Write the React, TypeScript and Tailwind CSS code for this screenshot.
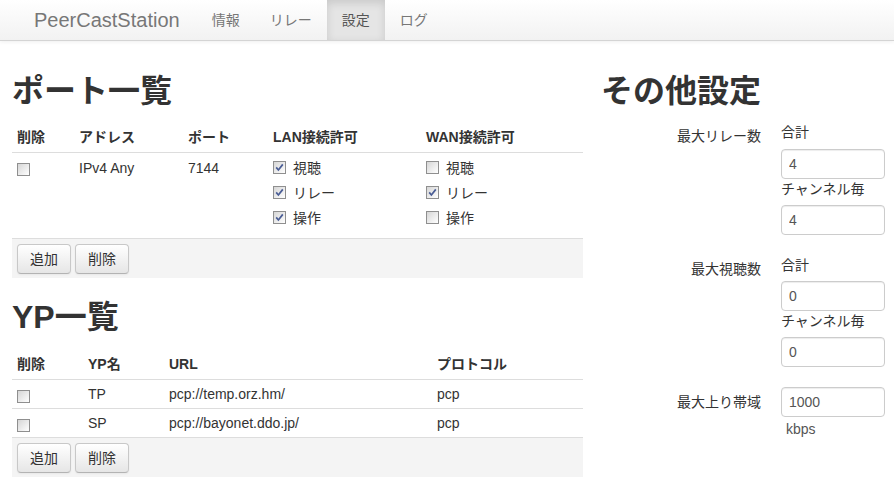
import React from "react";

function Check({ checked = false }: { checked?: boolean }) {
  return (
    <span className="inline-flex h-[13px] w-[13px] shrink-0 items-center justify-center border border-[#8f8f8f] bg-linear-to-br from-[#d6d6d6] to-white">
      {checked && (
        <svg viewBox="0 0 11 11" className="h-[11px] w-[11px]">
          <path d="M2.2 5.4 L4.4 8 L8.8 2.4" fill="none" stroke="#4a5d95" strokeWidth="1.7" />
        </svg>
      )}
    </span>
  );
}

function Button({ children }: { children: React.ReactNode }) {
  return (
    <button className="h-[30px] rounded-[4px] border border-[#c8c8c8] border-b-[#b3b3b3] bg-linear-to-b from-white to-[#e6e6e6] px-[12px] text-[14px] leading-[20px] text-[#333] shadow-[0_1px_2px_rgba(0,0,0,0.05)]">
      {children}
    </button>
  );
}

function Footer() {
  return (
    <div className="flex gap-[4px] bg-[#f4f4f4] px-[5px] pt-[5px] pb-[4px]">
      <Button>追加</Button>
      <Button>削除</Button>
    </div>
  );
}

function CheckItem({ checked, label }: { checked?: boolean; label: string }) {
  return (
    <div className="flex h-[25px] items-center gap-[7px]">
      <Check checked={checked} />
      <span>{label}</span>
    </div>
  );
}

function NumberInput({ value }: { value: string }) {
  return (
    <input
      defaultValue={value}
      className="h-[30px] w-[104px] rounded-[4px] border border-[#ccc] bg-white px-[7px] text-[14px] text-[#555] shadow-[inset_0_1px_1px_rgba(0,0,0,0.075)] outline-none"
    />
  );
}

const navItems = ["情報", "リレー", "設定", "ログ"];

export default function App() {
  return (
    <div className="min-h-[484px] bg-white font-['Liberation_Sans','Noto_Sans_CJK_JP',sans-serif] text-[14px] leading-[20px] text-[#333]">
      {/* navbar */}
      <div className="flex h-[41px] items-center border-b border-[#d4d4d4] bg-linear-to-b from-white to-[#f2f2f2] shadow-[0_1px_4px_rgba(0,0,0,0.065)]">
        <div className="pl-[34px] pr-[17px] text-[20px] leading-[20px] text-[#777]">PeerCastStation</div>
        <div className="flex h-[40px]">
          {navItems.map((item) => (
            <div
              key={item}
              className={
                item === "設定"
                  ? "flex h-[40px] items-center bg-[#e5e5e5] px-[15px] text-[#555] shadow-[inset_0_3px_8px_rgba(0,0,0,0.125)]"
                  : "flex h-[40px] items-center px-[15px] text-[#777]"
              }
            >
              {item}
            </div>
          ))}
        </div>
      </div>

      <div className="flex gap-[18px] pl-[12px]">
        {/* left column */}
        <div className="w-[571px]">
          <h2 className="mt-[30px] mb-[8px] text-[32px] leading-[40px] font-bold text-[#333]">ポート一覧</h2>
          <div className="grid grid-cols-[62px_109px_85px_153px_1fr] border-b border-[#ddd] pt-[8px] pb-[5px] font-bold">
            <div className="pl-[5px]">削除</div>
            <div className="pl-[5px]">アドレス</div>
            <div className="pl-[5px]">ポート</div>
            <div className="pl-[5px]">LAN接続許可</div>
            <div className="pl-[5px]">WAN接続許可</div>
          </div>
          <div className="grid grid-cols-[62px_109px_85px_153px_1fr] border-b border-[#ddd] pt-[2px] pb-[8px]">
            <div className="flex h-[25px] items-center pl-[5px] pt-[3px]">
              <Check />
            </div>
            <div className="flex h-[25px] items-center pl-[5px]">IPv4 Any</div>
            <div className="flex h-[25px] items-center pl-[5px]">7144</div>
            <div className="pl-[5px]">
              <CheckItem checked label="視聴" />
              <CheckItem checked label="リレー" />
              <CheckItem checked label="操作" />
            </div>
            <div className="pl-[5px]">
              <CheckItem label="視聴" />
              <CheckItem checked label="リレー" />
              <CheckItem label="操作" />
            </div>
          </div>
          <Footer />

          <h2 className="mt-[19px] mb-[8px] text-[32px] leading-[40px] font-bold text-[#333]">YP一覧</h2>
          <div className="grid grid-cols-[71px_81px_268px_1fr] border-b border-[#ddd] pt-[9px] pb-[5px] font-bold">
            <div className="pl-[5px]">削除</div>
            <div className="pl-[5px]">YP名</div>
            <div className="pl-[5px]">URL</div>
            <div className="pl-[5px]">プロトコル</div>
          </div>
          {[
            ["TP", "pcp://temp.orz.hm/"],
            ["SP", "pcp://bayonet.ddo.jp/"],
          ].map(([name, url]) => (
            <div key={name} className="grid h-[29px] grid-cols-[71px_81px_268px_1fr] items-center border-b border-[#ddd]">
              <div className="flex pl-[5px] pt-[4px]">
                <Check />
              </div>
              <div className="pl-[5px]">{name}</div>
              <div className="pl-[5px]">{url}</div>
              <div className="pl-[5px]">pcp</div>
            </div>
          ))}
          <Footer />
        </div>

        {/* right column */}
        <div className="w-[284px]">
          <h2 className="mt-[30px] text-[32px] leading-[40px] font-bold text-[#333]">その他設定</h2>
          <div className="mt-[11px] flex flex-col gap-[20px]">
            <div className="flex gap-[20px]">
              <div className="w-[160px] pt-[4px] text-right">最大リレー数</div>
              <div className="flex flex-col">
                <div className="mb-[7px]">合計</div>
                <NumberInput value="4" />
                <div className="mb-[6px]">チャンネル毎</div>
                <NumberInput value="4" />
              </div>
            </div>
            <div className="flex gap-[20px]">
              <div className="w-[160px] pt-[4px] text-right">最大視聴数</div>
              <div className="flex flex-col">
                <div className="mb-[6px]">合計</div>
                <NumberInput value="0" />
                <div className="mb-[6px]">チャンネル毎</div>
                <NumberInput value="0" />
              </div>
            </div>
            <div className="flex gap-[20px]">
              <div className="w-[160px] pt-[5px] text-right">最大上り帯域</div>
              <div className="flex flex-col">
                <NumberInput value="1000" />
                <div className="mt-[2px] pl-[5px] text-[#555]">kbps</div>
              </div>
            </div>
          </div>
        </div>
      </div>
    </div>
  );
}
